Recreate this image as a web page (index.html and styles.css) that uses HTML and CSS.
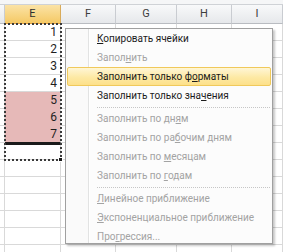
FILE: index.html
```html
<!DOCTYPE html>
<html>
<head>
<meta charset="utf-8">
<link rel="stylesheet" href="styles.css">
</head>
<body>
<div class="app">
  <div class="topbar"></div>
  <div class="sheet">
    <div class="hdr"></div><div class="hdr sel">E</div><div class="hdr">F</div><div class="hdr">G</div><div class="hdr">H</div><div class="hdr">I</div>

    <div class="c"></div><div class="c num">1</div><div class="c"></div><div class="c"></div><div class="c"></div><div class="c"></div>
    <div class="c"></div><div class="c num">2</div><div class="c"></div><div class="c"></div><div class="c"></div><div class="c"></div>
    <div class="c"></div><div class="c num">3</div><div class="c"></div><div class="c"></div><div class="c"></div><div class="c"></div>
    <div class="c"></div><div class="c num">4</div><div class="c"></div><div class="c"></div><div class="c"></div><div class="c"></div>
    <div class="c"></div><div class="c num pink">5</div><div class="c"></div><div class="c"></div><div class="c"></div><div class="c"></div>
    <div class="c"></div><div class="c num pink">6</div><div class="c"></div><div class="c"></div><div class="c"></div><div class="c"></div>
    <div class="c"></div><div class="c num pink last">7</div><div class="c"></div><div class="c"></div><div class="c"></div><div class="c"></div>
    <div class="c"></div><div class="c active"></div><div class="c"></div><div class="c"></div><div class="c"></div><div class="c"></div>
    <div class="c"></div><div class="c"></div><div class="c"></div><div class="c"></div><div class="c"></div><div class="c"></div>
    <div class="c"></div><div class="c"></div><div class="c"></div><div class="c"></div><div class="c"></div><div class="c"></div>
    <div class="c"></div><div class="c"></div><div class="c"></div><div class="c"></div><div class="c"></div><div class="c"></div>
    <div class="c"></div><div class="c"></div><div class="c"></div><div class="c"></div><div class="c"></div><div class="c"></div>
    <div class="c"></div><div class="c"></div><div class="c"></div><div class="c"></div><div class="c"></div><div class="c"></div>
    <div class="c"></div><div class="c"></div><div class="c"></div><div class="c"></div><div class="c"></div><div class="c"></div>
  </div>

  <div class="ants"></div>
  <div class="handle"></div>

  <div class="menu">
    <div class="item"><u>К</u>опировать ячейки</div>
    <div class="item dis">Запол<u>н</u>ить</div>
    <div class="item hot">Заполнить только ф<u>о</u>рматы</div>
    <div class="item">Заполнить только зна<u>ч</u>ения</div>
    <div class="sep"></div>
    <div class="item dis">Заполнить по дн<u>я</u>м</div>
    <div class="item dis">Заполнить по ра<u>б</u>очим дням</div>
    <div class="item dis">Заполнить по <u>м</u>есяцам</div>
    <div class="item dis">Заполнить по <u>г</u>одам</div>
    <div class="sep"></div>
    <div class="item dis"><u>Л</u>инейное приближение</div>
    <div class="item dis"><u>Э</u>кспоненциальное приближение</div>
    <div class="item dis end">Про<u>г</u>рессия...</div>
  </div>
</div>
</body>
</html>
```

FILE: styles.css
```css
* { box-sizing: border-box; }

html, body {
  margin: 0;
  padding: 0;
  background: #ffffff;
}

.app {
  position: relative;
  width: 283px;
  height: 252px;
  overflow: hidden;
  background: #ffffff;
  font-family: "Roboto", "Liberation Sans", sans-serif;
}

.topbar {
  height: 5px;
  background: #f5f6f7;
  border-bottom: 1px solid #cfd2d6;
}

.sheet {
  display: grid;
  grid-template-columns: 5px 56px 55px 61px 55px 51px;
  grid-template-rows: 19px;
  grid-auto-rows: 17px;
}

.hdr {
  background: linear-gradient(#f8f9fa, #e6e8eb);
  border-right: 1px solid #c9ccd1;
  border-bottom: 1px solid #b9bcc1;
  color: #3c3c3c;
  font-size: 11px;
  line-height: 18px;
  text-align: center;
}

.hdr.sel {
  background: linear-gradient(#fbe3a6, #f5c965);
  border-bottom-color: #e2a03f;
  border-right-color: #d9ab5a;
  color: #2f2f2f;
}

.c {
  border-right: 1px solid #d9d9d9;
  border-bottom: 1px solid #d9d9d9;
}

.num {
  text-align: right;
  padding-right: 3px;
  font-size: 12px;
  line-height: 17px;
  color: #1f1f1f;
}

.pink {
  background: #e6b9b8;
  border-bottom-color: #e6b9b8;
}

.pink.last {
  border-bottom: 1px solid #1a1a1a;
}

.active {
  box-shadow: inset 0 2px 0 #1a1a1a;
}

.ants {
  position: absolute;
  left: 4px;
  top: 23px;
  width: 58px;
  height: 138px;
  border: 2px dotted #3a3a3a;
}

.handle {
  position: absolute;
  left: 58px;
  top: 157px;
  width: 5px;
  height: 5px;
  background: #1a1a1a;
  border: 1px solid #ffffff;
}

.menu {
  position: absolute;
  left: 65px;
  top: 28px;
  width: 208px;
  background: linear-gradient(90deg, #fafafa 0, #fafafa 22px, #e2e3e3 22px, #e2e3e3 23px, #ffffff 23px, #ffffff 24px, #fcfcfc 24px);
  border: 1px solid #a0a0a0;
  box-shadow: 2px 2px 2px rgba(0, 0, 0, 0.22);
  padding: 0 1px;
  display: flex;
  flex-direction: column;
}

.item {
  flex: none;
  height: 19px;
  line-height: 17px;
  padding-left: 29px;
  font-size: 10px;
  color: #1b1b1b;
  white-space: nowrap;
  border: 1px solid transparent;
  border-radius: 2px;
}

.item.end {
  height: 16px;
}

.item u {
  text-decoration-thickness: 1px;
  text-underline-offset: 1px;
}

.item.dis {
  color: #a3a3a3;
}

.item.hot {
  background: linear-gradient(#fff6d6, #fde9a4 55%, #fde08a);
  border-color: #f0c95b;
}

.sep {
  flex: none;
  height: 4px;
  margin-left: 30px;
  margin-right: 1px;
  background: linear-gradient(90deg, #c6c6c6 50%, transparent 50%) 0 2px / 2px 1px repeat-x;
}
```
